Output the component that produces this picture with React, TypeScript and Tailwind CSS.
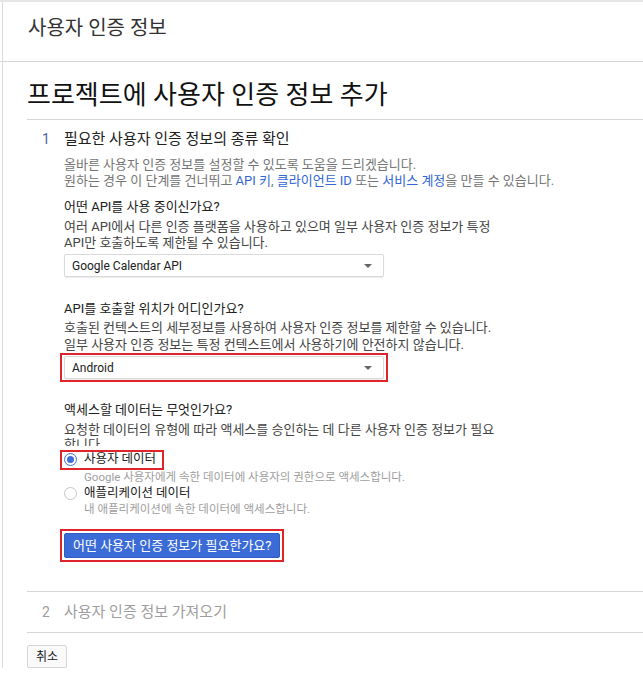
import React from "react";

const FONT = { fontFamily: 'Roboto, "Noto Sans CJK KR", sans-serif' };

function Select({ value }: { value: string }) {
  return (
    <div className="flex h-[23px] w-[320px] items-center justify-between rounded-[2px] border border-[#d9d9d9] bg-white pl-[7px] pr-[11px] text-[12px] text-[#212121] shadow-[0_1px_1px_rgba(0,0,0,0.08)]">
      <span>{value}</span>
      <span className="h-0 w-0 border-x-[4px] border-t-[4px] border-x-transparent border-t-[#666]" />
    </div>
  );
}

function Radio({ checked }: { checked?: boolean }) {
  return checked ? (
    <span className="flex h-[13px] w-[13px] items-center justify-center rounded-full border border-[#3e6fd8] bg-white">
      <span className="h-[7px] w-[7px] rounded-full bg-[#3e6fd8]" />
    </span>
  ) : (
    <span className="h-[13px] w-[13px] rounded-full border border-[#c6c6c6] bg-white" />
  );
}

export default function App() {
  return (
    <div className="min-h-[675px] bg-white" style={FONT}>
      <div className="h-[2px] bg-[#e6e6e6]" />
      <header className="border-b border-[#d6d6d6] pl-[2px]">
        <div className="h-[59px] border-l border-[#dcdcdc] pl-[25px] pt-[14px] text-[20px] leading-[24px] text-[#333]">
          사용자 인증 정보
        </div>
      </header>

      <div className="ml-[2px] border-l border-[#dcdcdc] pl-[24px]">
        <div className="h-[58px] border-b border-[#d6d6d6] pt-[17px] text-[26px] leading-[32px] text-[#111]">
          프로젝트에 사용자 인증 정보 추가
        </div>

        {/* step 1 */}
        <section className="border-b border-[#d6d6d6] pb-[33px]">
          <div className="flex pl-[15px] pt-[9px] leading-[20px]">
            <span className="w-[22px] text-[14px] text-[#55609a]">1</span>
            <span className="text-[15px] text-[#212121]">필요한 사용자 인증 정보의 종류 확인</span>
          </div>

          <div className="pl-[37px]">
            <p className="mt-[8px] whitespace-nowrap text-[13px] leading-[16px] text-[#757575]">
              올바른 사용자 인증 정보를 설정할 수 있도록 도움을 드리겠습니다.
              <br />
              원하는 경우 이 단계를 건너뛰고 <span className="text-[#3367d6]">API 키</span>,{" "}
              <span className="text-[#3367d6]">클라이언트 ID</span> 또는{" "}
              <span className="text-[#3367d6]">서비스 계정</span>을 만들 수 있습니다.
            </p>

            <p className="mt-[10px] text-[13px] leading-[16px] text-[#212121]">어떤 API를 사용 중이신가요?</p>
            <p className="mt-[4px] whitespace-nowrap text-[13px] leading-[16px] text-[#444]">
              여러 API에서 다른 인증 플랫폼을 사용하고 있으며 일부 사용자 인증 정보가 특정
              <br />
              API만 호출하도록 제한될 수 있습니다.
            </p>
            <div className="mt-[3px]">
              <Select value="Google Calendar API" />
            </div>

            <p className="mt-[24px] text-[13px] leading-[16px] text-[#212121]">API를 호출할 위치가 어디인가요?</p>
            <p className="mt-[3px] whitespace-nowrap text-[13px] leading-[16.5px] text-[#444]">
              호출된 컨텍스트의 세부정보를 사용하여 사용자 인증 정보를 제한할 수 있습니다.
              <br />
              일부 사용자 인증 정보는 특정 컨텍스트에서 사용하기에 안전하지 않습니다.
            </p>
            <div className="relative mt-[3px] w-[320px]">
              <Select value="Android" />
              <span className="pointer-events-none absolute -bottom-[3px] -left-[4px] -right-[4px] -top-[3px] border-2 border-[#e0242c]" />
            </div>

            <p className="mt-[23px] text-[13px] leading-[16px] text-[#212121]">액세스할 데이터는 무엇인가요?</p>
            <p className="mt-[4px] whitespace-nowrap text-[13px] leading-[15px] text-[#444]">
              요청한 데이터의 유형에 따라 액세스를 승인하는 데 다른 사용자 인증 정보가 필요
              <br />
              합니다.
            </p>

            <div className="relative -mt-[6px] bg-white">
              <div className="relative inline-flex h-[20px] items-center gap-[7px] text-[12.5px] text-[#212121]">
                <Radio checked />
                <span>사용자 데이터</span>
                <span className="pointer-events-none absolute -left-[4px] -right-[8px] top-0 bottom-0 border-2 border-[#e0242c]" />
              </div>
              <p className="pl-[20px] text-[11.5px] leading-[14px] text-[#9e9e9e]">
                Google 사용자에게 속한 데이터에 사용자의 권한으로 액세스합니다.
              </p>
              <div className="flex h-[18px] items-center gap-[7px] text-[12.5px] text-[#212121]">
                <Radio />
                <span>애플리케이션 데이터</span>
              </div>
              <p className="pl-[20px] text-[11.5px] leading-[14px] text-[#9e9e9e]">
                내 애플리케이션에 속한 데이터에 액세스합니다.
              </p>
            </div>

            <div className="relative mt-[17px] inline-block">
              <button className="h-[25px] rounded-[2px] border border-[#2f5ec4] bg-[#3b6bd6] px-[8px] text-[13px] text-white">
                어떤 사용자 인증 정보가 필요한가요?
              </button>
              <span className="pointer-events-none absolute -bottom-[4px] -left-[4px] -right-[4px] -top-[4px] border-2 border-[#e0242c]" />
            </div>
          </div>
        </section>

        {/* step 2 */}
        <div className="flex h-[41px] items-center border-b border-[#d6d6d6] pl-[15px]">
          <span className="w-[22px] text-[14px] text-[#9e9e9e]">2</span>
          <span className="text-[15px] text-[#9e9e9e]">사용자 인증 정보 가져오기</span>
        </div>

        <button className="mt-[12px] h-[23px] w-[40px] rounded-[2px] border border-[#d6d6d6] bg-[#fafafa] text-[12px] text-[#212121]">
          취소
        </button>
      </div>
    </div>
  );
}
